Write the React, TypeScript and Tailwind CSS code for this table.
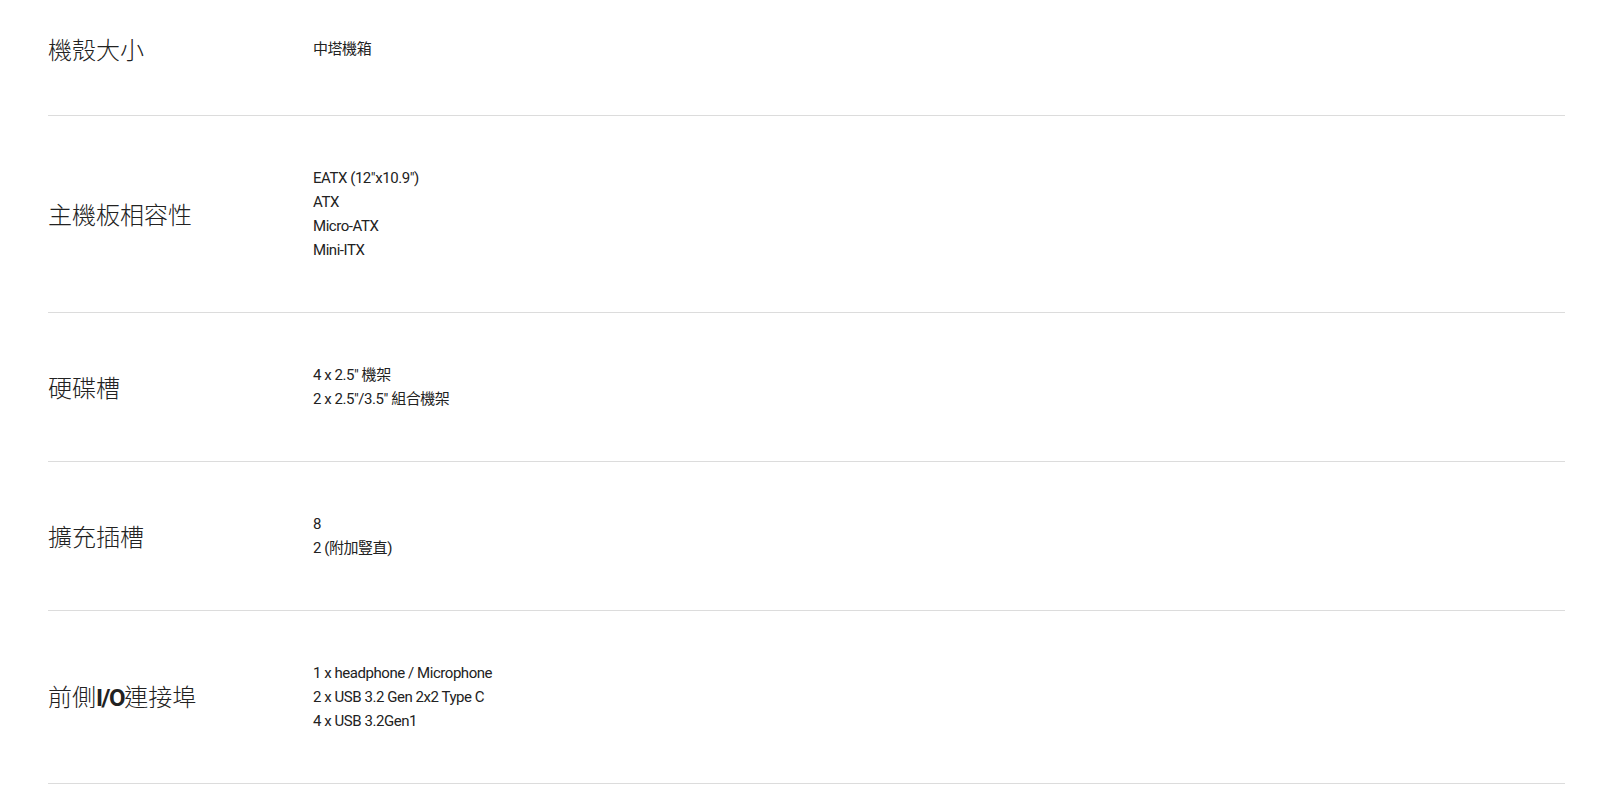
const specs: { label: React.ReactNode; values: string[] }[] = [
  { label: "機殼大小", values: ["中塔機箱"] },
  {
    label: "主機板相容性",
    values: ['EATX (12"x10.9")', "ATX", "Micro-ATX", "Mini-ITX"],
  },
  { label: "硬碟槽", values: ['4 x 2.5" 機架', '2 x 2.5"/3.5" 組合機架'] },
  { label: "擴充插槽", values: ["8", "2 (附加豎直)"] },
  {
    label: (
      <>
        前側<span className="font-['Roboto',sans-serif] font-bold tracking-[-0.06em]">I/O</span>連接埠
      </>
    ),
    values: [
      "1 x headphone / Microphone",
      "2 x USB 3.2 Gen 2x2 Type C",
      "4 x USB 3.2Gen1",
    ],
  },
];

export default function App() {
  return (
    <div className="min-h-screen bg-white pl-[48px] pr-[39px] pt-[33px] font-['Roboto','Noto_Sans_CJK_TC',sans-serif] text-[#222]">
      {specs.map((spec, i) => (
        <div
          key={i}
          className={`flex items-center border-b border-[#dcdcdc] pb-[50px] ${i === 0 ? "pt-0" : "pt-[50px]"}`}
        >
          <div className="w-[265px] shrink-0 text-[24px] leading-[32px] font-['Noto_Sans_CJK_TC',sans-serif] font-light">
            {spec.label}
          </div>
          <div className="flex flex-col text-[15px] leading-[24px] tracking-[-0.03em]">
            {spec.values.map((v) => (
              <span key={v}>{v}</span>
            ))}
          </div>
        </div>
      ))}
    </div>
  );
}
